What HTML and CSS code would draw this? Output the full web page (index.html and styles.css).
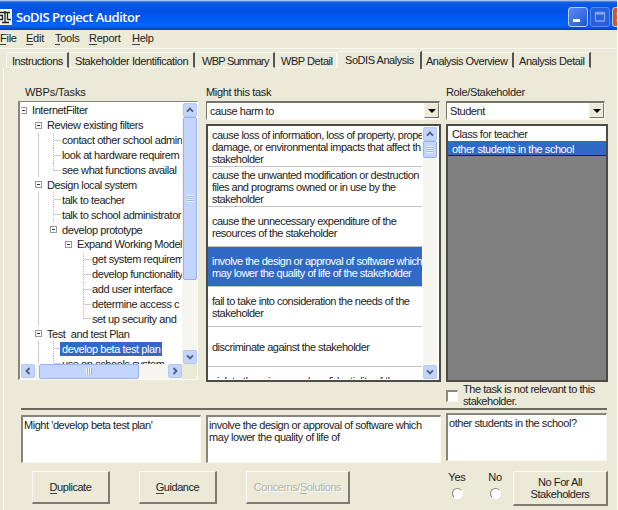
FILE: index.html
```html
<!DOCTYPE html>
<html lang="en">
<head>
    <meta charset="utf-8">
    <title>SoDIS Project Auditor</title>
    <link rel="stylesheet" href="styles.css">
</head>
<body>
    <svg class="defs" width="0" height="0">
        <symbol id="up" viewBox="0 0 14 14"><path d="M3.5 8.8 7 5.3l3.5 3.5" fill="none" stroke="#4d6185" stroke-width="2.2"/></symbol>
        <symbol id="down" viewBox="0 0 14 14"><path d="M3.5 5.2 7 8.7l3.5-3.5" fill="none" stroke="#4d6185" stroke-width="2.2"/></symbol>
        <symbol id="left" viewBox="0 0 14 14"><path d="M8.8 3.5 5.3 7l3.5 3.5" fill="none" stroke="#4d6185" stroke-width="2.2"/></symbol>
        <symbol id="right" viewBox="0 0 14 14"><path d="M5.2 3.5 8.7 7l-3.5 3.5" fill="none" stroke="#4d6185" stroke-width="2.2"/></symbol>
    </svg>

    <div class="window">
        <div class="titlebar">
            <svg class="app-icon" width="12" height="16" viewBox="0 0 12 16">
                <rect width="12" height="16" fill="#f4f4f0"/>
                <path d="M0 3.500h10M5 2v11M2 13.500h7M0 6.500h2.500v4M0 10.500h3M7.500 4v6.500M7.500 10.500h3.500" fill="none" stroke="#222" stroke-width="1.300"/>
            </svg>
            <span class="title">SoDIS Project Auditor</span>
            <div class="controls">
                <span class="control"><svg width="18" height="18"><rect x="4" y="11" width="7" height="3" fill="#fff"/></svg></span>
                <span class="control dim"><svg width="18" height="18"><path d="M4.500 4.500h9v8.500h-9zM4.500 6h9" fill="none" stroke="#7ba2f2" stroke-width="1.300"/></svg></span>
                <span class="control close"><svg width="18" height="18"><path d="M4 5l8 8M12 5l-8 8" stroke="#fff" stroke-width="2"/></svg></span>
            </div>
        </div>

        <div class="menu">
            <span class="m-file"><u>F</u>ile</span>
            <span class="m-edit"><u>E</u>dit</span>
            <span class="m-tools"><u>T</u>ools</span>
            <span class="m-report"><u>R</u>eport</span>
            <span class="m-help"><u>H</u>elp</span>
        </div>

        <div class="tabs">
            <div class="tab t1">Instructions</div>
            <div class="tab t2">Stakeholder Identification</div>
            <div class="tab t3">WBP Summary</div>
            <div class="tab t4">WBP Detail</div>
            <div class="tab t5 active">SoDIS Analysis</div>
            <div class="tab t6">Analysis Overview</div>
            <div class="tab t7">Analysis Detail</div>
        </div>

        <div class="page">
            <div class="lists">
                <div class="col-tasks">
                    <div class="label wbp-label">WBPs/Tasks</div>
                    <div class="tree-box">
                        <div class="tree">
                            <div class="node n0"><i class="box"></i><span>InternetFilter</span></div>
                            <div class="node n1"><i class="box"></i><span>Review existing filters</span></div>
                            <div class="node n2"><i class="twig"></i><span>contact other school admin</span></div>
                            <div class="node n2"><i class="twig"></i><span>look at hardware requirem</span></div>
                            <div class="node n2"><i class="twig last"></i><span>see what functions availal</span></div>
                            <div class="node n1"><i class="box"></i><span>Design local system</span></div>
                            <div class="node n2"><i class="twig"></i><span>talk to teacher</span></div>
                            <div class="node n2"><i class="twig"></i><span>talk to school administrator</span></div>
                            <div class="node n2"><i class="box"></i><span>develop prototype</span></div>
                            <div class="node n3"><i class="box"></i><span>Expand Working Model</span></div>
                            <div class="node n4"><i class="twig"></i><span>get system requirem</span></div>
                            <div class="node n4"><i class="twig"></i><span>develop functionality</span></div>
                            <div class="node n4"><i class="twig"></i><span>add user interface</span></div>
                            <div class="node n4"><i class="twig"></i><span>determine access c</span></div>
                            <div class="node n4"><i class="twig last"></i><span>set up security and</span></div>
                            <div class="node n1"><i class="box"></i><span>Test&nbsp; and test Plan</span></div>
                            <div class="node n2"><i class="twig"></i><span class="picked">develop beta test plan</span></div>
                            <div class="node n2"><i class="twig"></i><span>use on schools system</span></div>
                        </div>
                        <div class="vscroll">
                            <svg class="btn"><use href="#up"/></svg>
                            <div class="thumb tree-thumb"><i class="grip"></i></div>
                            <svg class="btn end"><use href="#down"/></svg>
                        </div>
                        <div class="hscroll">
                            <svg class="btn"><use href="#left"/></svg>
                            <div class="thumb wide-thumb"><i class="grip across"></i></div>
                            <svg class="btn end"><use href="#right"/></svg>
                        </div>
                        <div class="corner"></div>
                    </div>
                </div>

                <div class="col-harm">
                    <div class="label">Might this task</div>
                    <div class="combo"><span>cause harm to</span><b class="drop"></b></div>
                    <div class="list">
                        <div class="rows">
                            <div class="row"><p>cause loss of information, loss of property, prope<br>damage, or environmental impacts that affect th<br>stakeholder</p></div>
                            <div class="row"><p>cause the unwanted modification or destruction<br>files and programs owned or in use by the<br>stakeholder</p></div>
                            <div class="row"><p>cause the unnecessary expenditure of the<br>resources of the stakeholder</p></div>
                            <div class="row selected"><p>involve the design or approval of software which<br>may lower the quality of life of the stakeholder</p></div>
                            <div class="row"><p>fail to take into consideration the needs of the<br>stakeholder</p></div>
                            <div class="row"><p>discriminate against the stakeholder</p></div>
                            <div class="row"><p>violate the privacy and confidentiality of the<br>stakeholder</p></div>
                        </div>
                        <div class="vscroll">
                            <svg class="btn"><use href="#up"/></svg>
                            <div class="thumb small-thumb"><i class="grip"></i></div>
                            <svg class="btn end"><use href="#down"/></svg>
                        </div>
                    </div>
                </div>

                <div class="col-role">
                    <div class="label">Role/Stakeholder</div>
                    <div class="combo"><span>Student</span><b class="drop"></b></div>
                    <div class="list grey">
                        <div class="item">Class for teacher</div>
                        <div class="item selected">other students in the school</div>
                    </div>
                    <div class="relevant">
                        <i class="check"></i>
                        <p>The task is not relevant to this<br>stakeholder.</p>
                    </div>
                </div>
            </div>

            <div class="rule"></div>

            <div class="answers">
                <div class="field f1">Might 'develop beta test plan'</div>
                <div class="field f2">involve the design or approval of software which<br>may lower the quality of life of</div>
                <div class="field f3">other students in the school?</div>
            </div>

            <div class="actions">
                <div class="button duplicate"><span><u>D</u>uplicate</span></div>
                <div class="button guidance"><span><u>G</u>uidance</span></div>
                <div class="button concerns disabled"><span>Concerns/<u>S</u>olutions</span></div>
                <div class="radio yes"><span>Yes</span><i></i></div>
                <div class="radio no"><span>No</span><i></i></div>
                <div class="button all"><span>No For All<br>Stakeholders</span></div>
            </div>
        </div>
    </div>
</body>
</html>
```

FILE: styles.css
```css
* {
    box-sizing: border-box;
}

body {
    margin: 0;
    overflow: hidden;
    background-color: #fff;
    font: 11px/12px "Liberation Sans", Arial, sans-serif;
    letter-spacing: -0.45px;
    color: #222;
    white-space: nowrap;
}

p {
    margin: 0;
}

.defs {
    display: block;
}

.window {
    display: flex;
    flex-direction: column;
    width: 617px;
    height: 510px;
    background-color: #ebe9d8;
}

/* title bar */
.titlebar {
    display: flex;
    height: 30px;
    padding-top: 1px;
    overflow: hidden;
    background: linear-gradient(#d8e4f4 0, #1c62dc 2px, #0a5ae8 4px, #0052e0 10px, #0058f0 17px, #0264fe 25px, #0050dc 28px, #0340b4 30px);
}

.app-icon {
    margin-top: 8px;
}

.title {
    margin-left: 4px;
    font: 600 13px/33px "Open Sans", "Noto Sans", sans-serif;
    letter-spacing: -0.5px;
    color: #fff;
}

.controls {
    display: flex;
    gap: 2px;
    width: 49px;
    margin: 6px 0 0 auto;
    overflow: hidden;
}

.control {
    flex: none;
    width: 20px;
    height: 20px;
    border: 1px solid #b8cdf5;
    border-radius: 3px;
    background: linear-gradient(135deg, #5c8cf0, #2255d8);
}

.dim {
    border-color: #588af0;
    background: #2860dc;
}

.close {
    background: #d65431;
}

/* menu */
.menu {
    display: flex;
    height: 18px;
    line-height: 17px;
    letter-spacing: -0.25px;
}

.m-file { width: 26px; }
.m-edit { width: 29px; }
.m-tools { width: 34px; }
.m-report { width: 43px; }

u {
    text-decoration: none;
    border-bottom: 1px solid #444;
}

/* tabs */
.tabs {
    display: flex;
    height: 20px;
    padding: 3px 0 0 6px;
    border-top: 1px solid #f8f7f0;
}

.tab {
    height: 16px;
    padding-left: 5px;
    border-top: 1px solid #f8f7f0;
    border-bottom: 1px solid #f8f7f0;
    border-right: 2px solid #555;
    line-height: 16px;
}

.t1 { width: 63px; border-left: 1px solid #f8f7f0; }
.t2 { width: 126px; padding-left: 6px; letter-spacing: -0.4px; }
.t3 { width: 80px; padding-left: 7px; letter-spacing: -0.75px; }
.t4 { width: 63px; padding-left: 6px; border-right-color: #f8f7f0; }
.t5 { width: 84px; padding-left: 7px; }
.t6 { width: 92px; padding-left: 4px; letter-spacing: -0.5px; }
.t7 { width: 77px; }

.active {
    height: 18px;
    margin-top: -1px;
    border-bottom: 0;
}

/* page */
.page {
    flex: 1;
    margin-left: 3px;
    padding: 18px 0 0 15px;
    border-left: 1px solid #faf9f2;
}

.lists {
    display: grid;
    grid-template-columns: 181px 233px 162px;
    column-gap: 7px;
    height: 321px;
    margin-left: -1px;
}

.label {
    height: 15px;
    letter-spacing: -0.35px;
}

.wbp-label {
    padding-left: 7px;
    letter-spacing: -0.1px;
}

.tree-box {
    display: grid;
    grid-template: 261px 15px / 161px 15px;
    width: 180px;
    height: 279px;
    padding: 1px 0 1px 1px;
    border: 1px solid #888578;
    border-width: 1px 1px 1px 2px;
    border-right-color: #faf9f2;
    border-bottom-color: #faf9f2;
    background: #fff;
}

.tree {
    overflow: hidden;
    letter-spacing: -0.42px;
}

.node {
    display: flex;
    align-items: center;
    height: 14.9px;
    line-height: 14px;
}

.n0 { margin-left: -1px; }
.n1 { padding-left: 14px; }
.n2 { padding-left: 29px; }
.n3 { padding-left: 44px; }
.n4 { padding-left: 59px; }

.n2, .n3, .n4 {
    background: linear-gradient(#ccc, #ccc) 17px 0 / 1px 100% no-repeat;
}

.box {
    flex: none;
    width: 7px;
    height: 7px;
    margin-right: 5px;
    border: 1px solid #999;
    background: linear-gradient(#333, #333) center / 3px 1px no-repeat;
}

.twig {
    flex: none;
    width: 8px;
    height: 15px;
    margin: 0 1px 0 3px;
    border-left: 1px dotted #bbb;
    background: linear-gradient(#ccc, #ccc) 0 7px / 7px 1px no-repeat;
}

.last {
    height: 8px;
    margin-bottom: 7px;
}

.picked {
    margin-left: -2px;
    padding: 0 2px;
    background: #316ac5;
    color: #fff;
}

/* scrollbars */
.vscroll, .hscroll {
    display: flex;
    background: #f6f5f0;
}

.vscroll {
    flex-direction: column;
}

.tree-box .vscroll {
    padding-left: 1px;
}

.corner {
    background: #ebe9d8;
}

.btn {
    flex: none;
    width: 14px;
    height: 14px;
    border: 1px solid #b4c8f0;
    border-radius: 2px;
    background: #c4d5fc;
}

.end {
    margin-top: auto;
}

.hscroll .end {
    margin: 0 0 0 auto;
}

.thumb {
    display: flex;
    align-items: center;
    justify-content: center;
    border: 1px solid #98b3ec;
    border-radius: 2px;
    background: #c3d4fd;
}

.tree-thumb { height: 163px; }
.small-thumb { height: 17px; }
.wide-thumb { width: 100px; margin-left: 4px; }

.grip {
    width: 6px;
    height: 7px;
    background: repeating-linear-gradient(#eef4fe 0 1px, #9db5ea 1px 2px);
}

.across {
    background: repeating-linear-gradient(90deg, #eef4fe 0 1px, #9db5ea 1px 2px);
}

/* drop-downs and lists */
.combo {
    display: flex;
    justify-content: space-between;
    width: 234px;
    height: 19px;
    padding-left: 3px;
    border: 1px solid #faf9f2;
    border-top: 2px solid #77756b;
    border-left: 1px solid #77756b;
    background: #fff;
    line-height: 17px;
}

.col-role .combo {
    width: 159px;
}

.drop {
    width: 15px;
    height: 15px;
    border: 1px solid #77756b;
    border-top-color: #f4f3ea;
    border-left-color: #f4f3ea;
    background: #ebe9d8;
}

.drop::before {
    content: "";
    display: block;
    width: 0;
    margin: 5px 0 0 3px;
    border: 4px solid transparent;
    border-top-color: #000;
    border-bottom: 0;
}

.list {
    display: flex;
    width: 235px;
    height: 258px;
    margin-top: 4px;
    padding: 0 1px 1px 0;
    border: 2px solid #4c4b45;
    background: #fff;
}

.rows {
    width: 214px;
    padding-top: 1px;
    overflow: hidden;
}

.row {
    display: flex;
    align-items: center;
    height: 40px;
    padding-left: 4px;
    border-bottom: 1px solid #c4c4c4;
    letter-spacing: -0.5px;
}

.list .vscroll {
    width: 14px;
    margin: 1px 0 0 1px;
}

.selected {
    background: #316ac5;
    color: #fff;
}

.grey {
    display: block;
    width: 162px;
    padding: 0;
    background: #808080;
}

.item {
    height: 15px;
    padding-left: 4px;
    background: #fff;
    line-height: 16px;
}

.item.selected {
    background: #316ac5;
    border-bottom: 1px solid #222;
}

.relevant {
    display: flex;
    padding: 1px 0 0;
}

.check {
    width: 12px;
    height: 12px;
    margin: 7px 5px 0 0;
    border: 1px solid #faf9f2;
    border-top: 2px solid #8b887a;
    border-left: 2px solid #8b887a;
    background: #fff;
}

/* answers */
.rule {
    width: 586px;
    height: 2px;
    margin: 1px 0 0 2px;
    background: #6b695f;
}

.answers {
    display: flex;
    margin: 2px 0 0 2px;
}

.field {
    height: 48px;
    margin-top: 3px;
    padding: 2px 0 0 1px;
    border: 1px solid #faf9f2;
    border-top: 2px solid #88867a;
    border-left: 2px solid #88867a;
    background: #fff;
}

.f1 { width: 180px; }
.f2 { width: 235px; margin-left: 5px; }
.f3 { width: 161px; margin: 1px 0 0 5px; }

/* buttons */
.actions {
    display: flex;
    margin: 8px 0 0 13px;
}

.button {
    display: flex;
    align-items: center;
    justify-content: center;
    height: 33px;
    border: 1px solid #fbfaf4;
    border-right: 2px solid #7e7c70;
    border-bottom: 2px solid #7e7c70;
    text-align: center;
}

.duplicate { width: 78px; }
.guidance { width: 78px; margin-left: 29px; }
.concerns { width: 104px; margin-left: 29px; }
.all { width: 95px; height: 35px; margin-left: 5px; }

.disabled {
    color: #b5b2a2;
    text-shadow: 1px 1px #fff;
}

.disabled u {
    border-color: #b5b2a2;
}

.radio {
    width: 26px;
    text-align: center;
    letter-spacing: -0.2px;
}

.radio i {
    display: block;
    width: 11px;
    height: 11px;
    margin: 5px auto 0;
    border: 1px solid #fff;
    border-top-color: #88867a;
    border-left-color: #88867a;
    border-radius: 50%;
    background: #fff;
}

.yes { margin-left: 94px; }
.no { margin-left: 12px; }
```
